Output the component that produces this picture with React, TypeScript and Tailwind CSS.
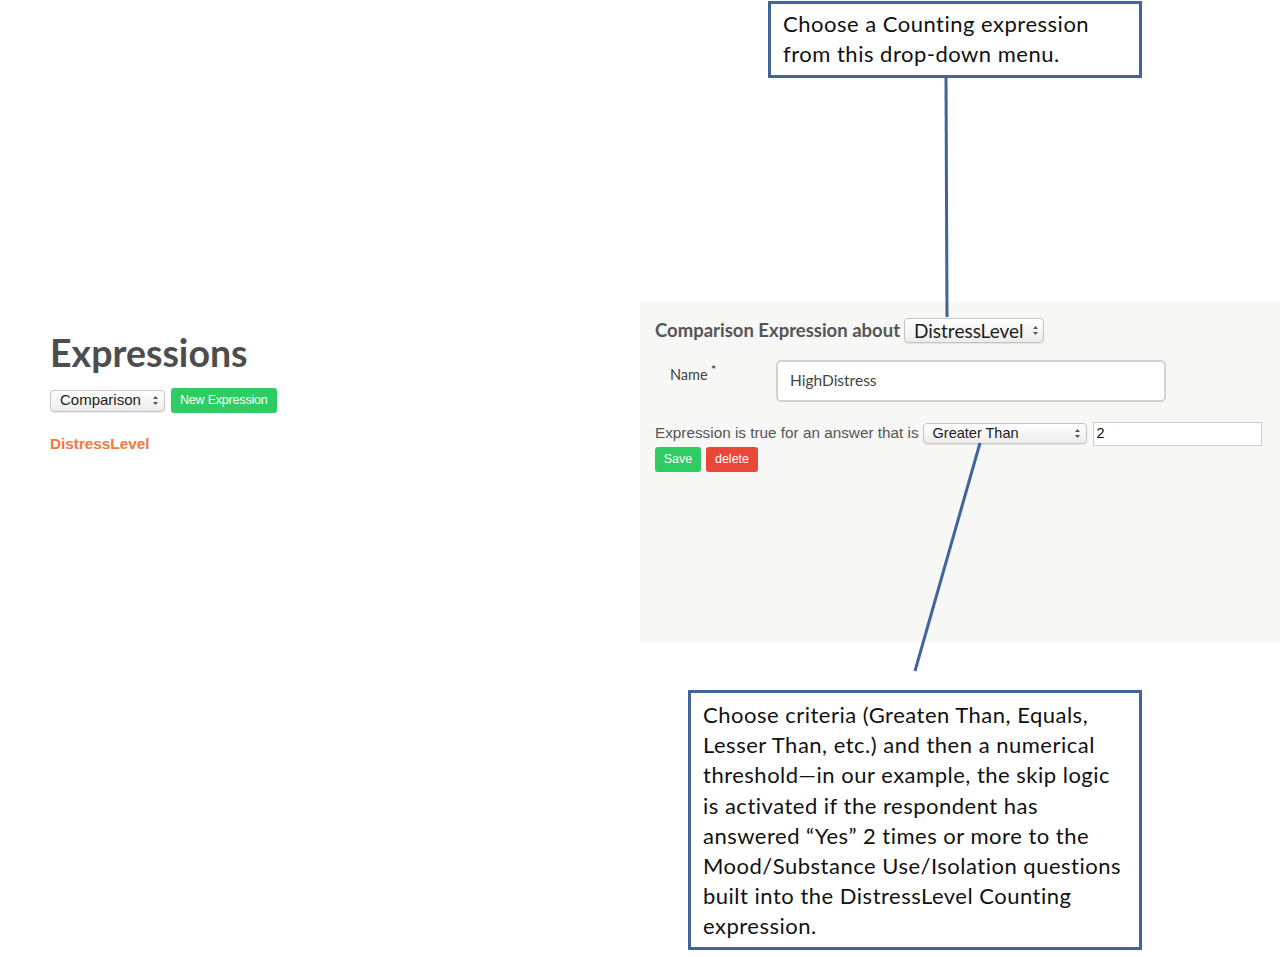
import React from "react";

const calloutFont = { fontFamily: "Lato, 'Open Sans', sans-serif" };
const uiFont = { fontFamily: "'Liberation Sans', Arial, sans-serif" };

const SelectBox = ({
  label,
  className,
}: {
  label: string;
  className: string;
}) => (
  <div
    className={`flex items-center justify-between rounded-[4px] border border-[#c4c4c4] bg-gradient-to-b from-white to-[#ececec] shadow-[0_1px_1px_rgba(0,0,0,0.08)] ${className}`}
  >
    <span className="text-[#1c1c1c]">{label}</span>
    <svg width="7" height="11" viewBox="0 0 7 11" className="ml-2 shrink-0">
      <path d="M3.5 1 L6 4 H1 Z" fill="#555" />
      <path d="M3.5 10 L6 7 H1 Z" fill="#555" />
    </svg>
  </div>
);

const Callout = ({
  lines,
  className,
}: {
  lines: string[];
  className: string;
}) => (
  <div
    className={`absolute border-[3px] border-[#41659a] bg-white text-[22px] leading-[30.2px] tracking-[0.5px] text-[#111] ${className}`}
    style={calloutFont}
  >
    {lines.map((l, i) => (
      <div key={i} className="whitespace-nowrap">
        {l}
      </div>
    ))}
  </div>
);

export default function App() {
  return (
    <div
      className="relative h-[957px] w-[1280px] overflow-hidden bg-white"
      style={{ fontFamily: "Lato, 'Liberation Sans', sans-serif" }}
    >
      <div className="flex">
        {/* expressions list */}
        <div className="w-[640px] pl-[50px] pt-[331px]">
          <h1 className="text-[37.5px] font-bold leading-[44px] text-[#4d4d4d]">
            Expressions
          </h1>
          <div className="mt-[13px] flex items-center gap-[6px]" style={uiFont}>
            <SelectBox
              label="Comparison"
              className="h-[22px] w-[115px] pl-[9px] pr-[5px] text-[15px]"
            />
            <button className="h-[25px] rounded-[3px] bg-[#2ecc62] px-[9px] text-[12.5px] tracking-[-0.2px] text-white">
              New Expression
            </button>
          </div>
          <div
            className="mt-[20px] text-[15.3px] font-bold text-[#f27a3c]"
            style={uiFont}
          >
            DistressLevel
          </div>
        </div>

        {/* expression editor */}
        <div className="mt-[302px] h-[340px] w-[640px] bg-[#f7f7f5] pl-[15px] pt-[15px]">
          <div className="flex items-center gap-[4px]">
            <span className="text-[18.5px] font-bold text-[#555]">
              Comparison Expression about
            </span>
            <SelectBox
              label="DistressLevel"
              className="h-[25px] w-[140px] pl-[9px] pr-[6px] text-[19px]"
            />
          </div>
          <div className="mt-[15px] flex items-start">
            <span className="w-[121px] pl-[15px] pt-[4px] text-[14.5px] text-[#444]">
              Name <sup className="text-[11px] font-bold">*</sup>
            </span>
            <div className="flex h-[42px] w-[390px] items-center rounded-[5px] border-2 border-[#d2d2d2] bg-white pl-[12px] text-[15.5px] text-[#444]">
              HighDistress
            </div>
          </div>
          <div className="mt-[20px] flex items-center" style={uiFont}>
            <span className="text-[15.3px] text-[#555]">
              Expression is true for an answer that is
            </span>
            <SelectBox
              label="Greater Than"
              className="ml-[4px] h-[21px] w-[164px] pl-[9px] pr-[5px] text-[14.5px]"
            />
            <div className="ml-[6px] flex h-[24px] w-[169px] items-center border border-[#cfcfcf] bg-white pl-[3px] text-[14.5px] text-[#111]">
              2
            </div>
          </div>
          <div className="mt-[1px] flex gap-[5px]" style={uiFont}>
            <button className="h-[25px] w-[46px] rounded-[3px] bg-[#2ecc62] text-[12.5px] text-white">
              Save
            </button>
            <button className="h-[25px] w-[52px] rounded-[3px] bg-[#e8473a] text-[12.5px] text-white">
              delete
            </button>
          </div>
        </div>
      </div>

      {/* connector lines */}
      <svg
        className="pointer-events-none absolute inset-0"
        width="1280"
        height="957"
      >
        <line x1="946" y1="77" x2="947" y2="317" stroke="#41659a" strokeWidth="3" />
        <line x1="980" y1="443" x2="915" y2="671" stroke="#41659a" strokeWidth="3" />
      </svg>

      <Callout
        className="left-[768px] top-[1px] h-[77px] w-[374px] pl-[12px] pt-[5px]"
        lines={["Choose a Counting expression", "from this drop-down menu."]}
      />
      <Callout
        className="left-[688px] top-[690px] h-[260px] w-[454px] pl-[12px] pt-[7px]"
        lines={[
          "Choose criteria (Greaten Than, Equals,",
          "Lesser Than, etc.) and then a numerical",
          "threshold\u2014in our example, the skip logic",
          "is activated if the respondent has",
          "answered \u201cYes\u201d 2 times or more to the",
          "Mood/Substance Use/Isolation questions",
          "built into the DistressLevel Counting",
          "expression.",
        ]}
      />
    </div>
  );
}
